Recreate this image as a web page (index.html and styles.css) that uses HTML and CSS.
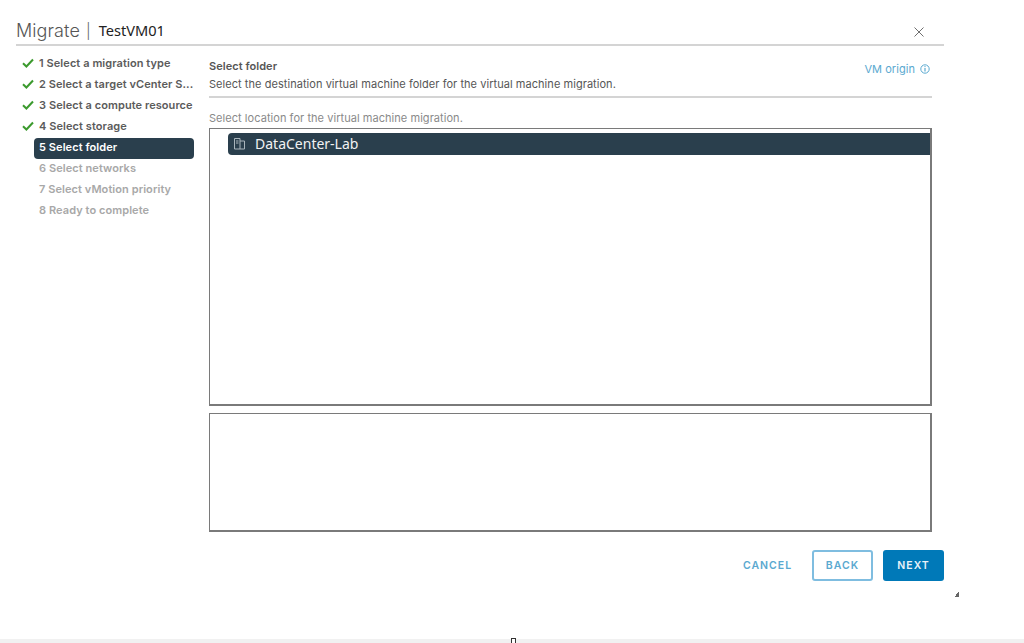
FILE: index.html
```html
<!DOCTYPE html>
<html lang="en">
<head>
<meta charset="utf-8">
<title>Migrate | TestVM01</title>
<link rel="stylesheet" href="styles.css">
</head>
<body>
<div class="page">
  <div class="dialog">
    <header class="head">
      <span class="title">Migrate</span>
      <span class="sep">|</span>
      <span class="vm">TestVM01</span>
      <svg class="close" width="10" height="10" viewBox="0 0 10 10"><path d="M.5.5l9 9M9.5.5l-9 9" stroke="#6f6f6f" stroke-width="1" fill="none"/></svg>
    </header>
    <div class="columns">
      <nav class="nav">
        <div class="step done"><svg class="check" width="12" height="10" viewBox="0 0 12 10"><path d="M1 5.2l3.4 3.3L11 1.5" stroke="#3c9a2e" stroke-width="2" fill="none"/></svg><span>1 Select a migration type</span></div>
        <div class="step done"><svg class="check" width="12" height="10" viewBox="0 0 12 10"><path d="M1 5.2l3.4 3.3L11 1.5" stroke="#3c9a2e" stroke-width="2" fill="none"/></svg><span>2 Select a target vCenter S...</span></div>
        <div class="step done"><svg class="check" width="12" height="10" viewBox="0 0 12 10"><path d="M1 5.2l3.4 3.3L11 1.5" stroke="#3c9a2e" stroke-width="2" fill="none"/></svg><span>3 Select a compute resource</span></div>
        <div class="step done"><svg class="check" width="12" height="10" viewBox="0 0 12 10"><path d="M1 5.2l3.4 3.3L11 1.5" stroke="#3c9a2e" stroke-width="2" fill="none"/></svg><span>4 Select storage</span></div>
        <div class="step active"><span>5 Select folder</span></div>
        <div class="step off"><span>6 Select networks</span></div>
        <div class="step off"><span>7 Select vMotion priority</span></div>
        <div class="step off"><span>8 Ready to complete</span></div>
      </nav>
      <main class="main">
        <div class="intro">
          <div class="intro-text">
            <div class="h">Select folder</div>
            <div class="desc">Select the destination virtual machine folder for the virtual machine migration.</div>
          </div>
          <div class="origin">VM origin
            <svg width="10" height="10" viewBox="0 0 10 10"><circle cx="5" cy="5" r="4.2" stroke="#5aa9d0" fill="none"/><path d="M5 4v3.6" stroke="#5aa9d0" stroke-width="1.2"/><circle cx="5" cy="2.6" r=".7" fill="#5aa9d0"/></svg>
          </div>
        </div>
        <div class="label">Select location for the virtual machine migration.</div>
        <div class="tree">
          <div class="node">
            <svg class="dc" width="13" height="13" viewBox="0 0 13 13"><path d="M1.5 1.5h5.5v10.5H1.5zM7 4h4.5v8H7M3 4h2.5M3 6h2.5" stroke="#a9b5bc" fill="none"/></svg>
            <span>DataCenter-Lab</span>
          </div>
        </div>
        <div class="details"></div>
      </main>
    </div>
    <footer class="foot">
      <button class="btn link">CANCEL</button>
      <button class="btn outline">BACK</button>
      <button class="btn solid">NEXT</button>
    </footer>
  </div>
  <div class="strip"></div>
</div>
<span class="grip"></span>
<span class="cursor"></span>
</body>
</html>
```
FILE: styles.css
```css
* { box-sizing: border-box; }
html, body { margin: 0; padding: 0; background: #fff; }
body { font-family: "Inter", "Liberation Sans", sans-serif; color: #565656; overflow: hidden; }
.page { width: 1024px; height: 643px; display: flex; flex-direction: column; }
.dialog { width: 928px; margin-left: 16px; flex: 1; display: flex; flex-direction: column; }
.head { height: 46px; padding-top: 16px; border-bottom: 2px solid #d4d4d4; display: flex; align-items: center; }
.title { font-size: 18px; font-weight: 300; color: #565656; letter-spacing: .1px; }
.sep { font-size: 15px; margin: 0 8px 0 6px; color: #666; font-weight: 300; }
.vm { font-family: "Noto Sans", sans-serif; font-size: 14.6px; color: #222; }
.close { margin-left: auto; margin-right: 20px; margin-top: 3px; }
.columns { display: flex; gap: 15px; flex: none; padding-top: 8px; }
.nav { width: 178px; font-size: 11px; font-weight: 600; letter-spacing: .07px; }
.step { height: 21px; padding-bottom: 3px; display: flex; align-items: center; white-space: nowrap; padding-left: 23px; position: relative; color: #5b5b5b; }
.check { position: absolute; left: 6px; top: 4px; }
.active { margin-left: 18px; padding-left: 5px; background: #2a3f4d; border-radius: 4px; color: #fff; }
.off { color: #a8a8a8; }
.main { width: 723px; font-size: 11px; letter-spacing: .05px; }
.intro { display: flex; justify-content: space-between; height: 44px; border-bottom: 2px solid #d4d4d4; padding-top: 6px; }
.h { font-weight: 600; height: 18px; line-height: 13px; color: #565656; }
.desc { line-height: 13px; color: #565656; }
.origin { color: #5aa9d0; display: flex; gap: 5px; align-items: center; height: 22px; margin-top: -2px; padding-right: 2px; }
.label { margin-top: 14px; line-height: 13px; color: #8a8a8a; }
.tree { height: 278px; margin-top: 3px; border: 2px solid #7a7a7a; border-width: 1px 2px 2px 1px; padding-top: 4px; padding-left: 18px; }
.node { height: 22px; padding-bottom: 1px; display: flex; align-items: center; background: #2a3f4d; border-radius: 4px 0 0 4px; color: #f2f2f2; font-family: "Noto Sans", sans-serif; font-size: 14px; letter-spacing: 0; padding-left: 5px; gap: 9px; }
.details { height: 119px; margin-top: 7px; border: 1px solid #7a7a7a; border-width: 1px 2px 2px 1px; }
.foot { display: flex; justify-content: flex-end; align-items: center; margin-top: 18px; }
.btn { height: 31px; width: 61px; font-family: inherit; font-size: 10.5px; font-weight: 600; letter-spacing: 1px; border-radius: 3px; border: 0; padding: 0; }
.link { background: none; color: #5aa9d0; margin-right: 21px; width: 48px; }
.outline { background: #fff; border: 2px solid #7fbde0; color: #5aa9d0; margin-right: 10px; }
.solid { background: #0079b8; color: #e8f2f8; }
.strip { height: 4px; background: #f1f1f1; flex: none; }
.grip { position: absolute; left: 954px; top: 592px; width: 5px; height: 5px; background: linear-gradient(135deg, transparent 50%, #666 50%); }
.cursor { position: absolute; left: 511px; top: 638px; width: 5px; height: 5px; border: 1px solid #333; border-bottom: 0; background: #fff; }
```
